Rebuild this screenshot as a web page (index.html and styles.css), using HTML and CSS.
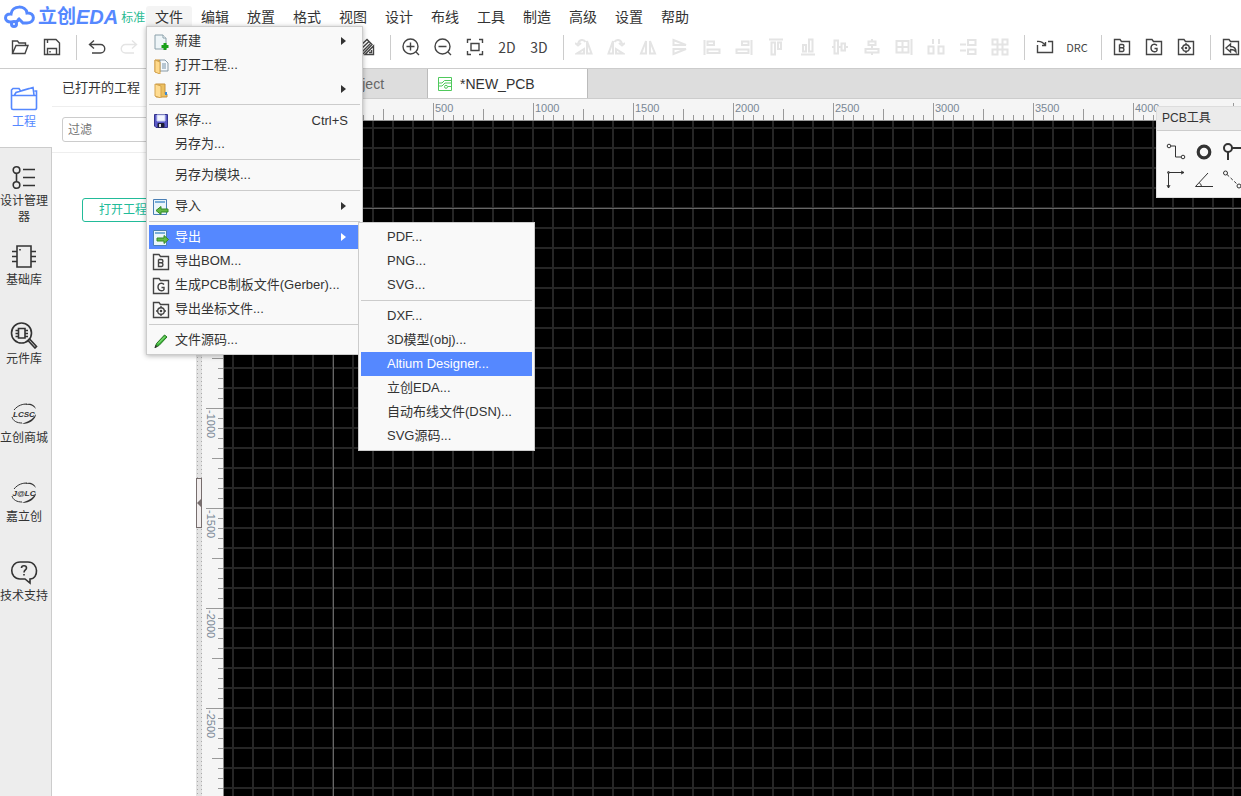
FILE: index.html
```html
<!DOCTYPE html>
<html lang="zh-CN">
<head>
<meta charset="utf-8">
<title>立创EDA</title>
<link rel="stylesheet" href="styles.css">
</head>
<body>
<svg class="sprite" aria-hidden="true">
  <symbol id="folder-box" viewBox="0 0 18 18"><path d="M1.500 16.500V1.500H7L8.500 3.500H16.500V16.500Z"/></symbol>
  <symbol id="bom" viewBox="0 0 18 18"><use href="#folder-box"/><path d="M6.500 6.500V13.500H9.500A1.900 1.900 0 0 0 9.500 9.800H6.500M9.300 9.800A1.600 1.600 0 0 0 9.300 6.500H6.500"/></symbol>
  <symbol id="gerber" viewBox="0 0 18 18"><use href="#folder-box"/><path d="M12 7.500C10.500 5.500 6 5.800 6 10S11 14.500 12 12.500V10.500H9.500"/></symbol>
  <symbol id="target" viewBox="0 0 18 18"><use href="#folder-box"/><circle cx="9" cy="10" r="3.300"/><circle cx="9" cy="10" r=".6"/><path d="M9 5V7M9 13V15M4 10H6M12 10H14"/></symbol>
</svg>
<header class="header">
  <div class="topline">
    <div class="logo">
      <svg class="cloud" viewBox="0 0 32 24"><path d="M8 17C-1 18 0 8 7 9C8 0 22 0 23 8C31 7 32 18 23 18H19L14 13"/><circle cx="10" cy="19" r="2.500"/><path d="M12 17L16 14"/></svg>
      <span class="logo-cn">立创</span><span class="logo-en">EDA</span><span class="edition">标准</span>
    </div>
    <nav class="menubar">
      <div class="menu-root">
        <button class="menu-button open">文件</button>
        <ul class="menu file-menu">
          <li class="item"><svg class="mi" viewBox="0 0 16 16"><path d="M2 1H10L13 4V15H2Z" fill="#eef5f8" stroke="#8aa0aa"/><path d="M10 1V4H13" fill="#fff" stroke="#8aa0aa"/><path d="M12 9V16M8.500 12.500H15.500" stroke="#18a018" stroke-width="3"/></svg><button>新建</button><i class="arrow"></i></li>
          <li class="item"><svg class="mi" viewBox="0 0 16 16"><path d="M2 2H7V14H2Z" fill="#e9b959" stroke="#c8933d"/><path d="M7 2H12L15 5V13H7Z" fill="#f5f9fc" stroke="#8799a5"/><path d="M9 6H13M9 8H13M9 10H13" stroke="#7893a8"/><path d="M2 2L7 4V16L2 14Z" fill="#ffd98a" stroke="#d3a34e"/></svg><button>打开工程...</button></li>
          <li class="item"><svg class="mi" viewBox="0 0 16 16"><path d="M3 2H12V12H14V15H3Z" fill="#ecc060" stroke="#c8933d"/><path d="M2 2L8 4V16L2 14Z" fill="#ffdc91" stroke="#d3a34e"/><path d="M13 10V13" stroke="#3a88d5" stroke-width="2"/></svg><button>打开</button><i class="arrow"></i></li>
          <li class="rule"></li>
          <li class="item"><svg class="mi" viewBox="0 0 16 16"><path d="M1.500 1.500H14.500V14.500H3L1.500 13Z" fill="#5a5ac8" stroke="#33338b"/><path d="M4 2H12V8H4Z" fill="#f2f5ff" stroke="#c5cdf0"/><path d="M5 10.500H11V14H5Z" fill="#1e1e37" stroke="#1e1e37"/><path d="M6 11H8V14H6Z" fill="#ddd" stroke="none"/></svg><button>保存...</button><kbd>Ctrl+S</kbd></li>
          <li class="item"><button>另存为...</button></li>
          <li class="rule"></li>
          <li class="item"><button>另存为模块...</button></li>
          <li class="rule"></li>
          <li class="item"><svg class="mi" viewBox="0 0 16 16"><path d="M.5.500H13.500V15.500H.500Z" fill="#eaf5fb" stroke="#4a7fb5"/><path d="M2 3H12" stroke="#78aed8" stroke-width="2"/><path d="M3 11.500L8 7.500V10H15V13H8V15.500Z" fill="#63b946" stroke="#338a26"/></svg><button>导入</button><i class="arrow"></i></li>
          <li class="rule"></li>
          <li class="item selected"><svg class="mi" viewBox="0 0 16 16"><path d="M.5.500H13.500V15.500H.500Z" fill="#eaf5fb" stroke="#4a7fb5"/><path d="M2 3H12" stroke="#78aed8" stroke-width="2"/><path d="M15.500 9.500L11 5.500V8H4V11H11V13.500Z" fill="#63b946" stroke="#338a26"/></svg><button>导出</button><i class="arrow"></i>
            <ul class="menu submenu">
              <li class="item"><button>PDF...</button></li>
              <li class="item"><button>PNG...</button></li>
              <li class="item"><button>SVG...</button></li>
              <li class="rule"></li>
              <li class="item"><button>DXF...</button></li>
              <li class="item"><button>3D模型(obj)...</button></li>
              <li class="item selected"><button>Altium Designer...</button></li>
              <li class="item"><button>立创EDA...</button></li>
              <li class="item"><button>自动布线文件(DSN)...</button></li>
              <li class="item"><button>SVG源码...</button></li>
            </ul>
          </li>
          <li class="item"><svg class="mi line"><use href="#bom"/></svg><button>导出BOM...</button></li>
          <li class="item"><svg class="mi line"><use href="#gerber"/></svg><button>生成PCB制板文件(Gerber)...</button></li>
          <li class="item"><svg class="mi line"><use href="#target"/></svg><button>导出坐标文件...</button></li>
          <li class="rule"></li>
          <li class="item"><svg class="mi" viewBox="0 0 16 16"><path d="M2 14.500L3.500 10.500L11.500 2L14 4L6 12.500Z" fill="#3db83a" stroke="#23761f"/><path d="M5 10.500L12 3.500" stroke="#a9ec9a"/><path d="M2 14.500L3 12.500L4 13.500Z" fill="#555"/></svg><button>文件源码...</button></li>
        </ul>
      </div>
      <button class="menu-button">编辑</button>
      <button class="menu-button">放置</button>
      <button class="menu-button">格式</button>
      <button class="menu-button">视图</button>
      <button class="menu-button">设计</button>
      <button class="menu-button">布线</button>
      <button class="menu-button">工具</button>
      <button class="menu-button">制造</button>
      <button class="menu-button">高级</button>
      <button class="menu-button">设置</button>
      <button class="menu-button">帮助</button>
    </nav>
  </div>
  <div class="toolbar">
    <button class="tool" aria-label="打开"><svg viewBox="0 0 18 18"><path d="M1.500 15V3H6.500L8 5H14.500V7.500M1.500 15.500L5 7.500H17L14 15.500Z"/></svg></button>
    <button class="tool" aria-label="保存"><svg viewBox="0 0 18 18"><path d="M1.500 1.500H13L16.500 5V16.500H1.500ZM4.500 16V10.500H13.500V16M4.500 2V5M7 13V14.500"/></svg></button>
    <span class="sep"></span>
    <button class="tool" aria-label="撤销"><svg viewBox="0 0 18 18"><path d="M6 2.500L1.500 6.500L6 10.500M2 6.500H12.500A4.200 4.200 0 0 1 12.500 15H4"/></svg></button>
    <button class="tool off thin" aria-label="重做"><svg viewBox="0 0 18 18"><path d="M12 2.500L16.500 6.500L12 10.500M16 6.500H5.500A4.200 4.200 0 0 0 5.500 15H14"/></svg></button>
    <span class="covered"></span>
    <button class="tool" aria-label="清理"><svg viewBox="0 0 18 18"><path d="M3 8L10 1.500L15 6.500L6 16M4 11L12 3.500M5 14L14 5M8 16.500H16.500V8ZM12 14.500H14.500V12"/></svg></button>
    <span class="sep"></span>
    <button class="tool" aria-label="放大"><svg viewBox="0 0 18 18"><circle cx="8.500" cy="8.500" r="7.500"/><path d="M14 14L17 17M4.500 8.500H12.500M8.500 4.500V12.500"/></svg></button>
    <button class="tool" aria-label="缩小"><svg viewBox="0 0 18 18"><circle cx="8.500" cy="8.500" r="7.500"/><path d="M14 14L17 17M4.500 8.500H12.500"/></svg></button>
    <button class="tool" aria-label="适应窗口"><svg viewBox="0 0 18 18"><path d="M1.500 5V1.500H5M13 1.500H16.500V5M16.500 13V16.500H13M5 16.500H1.500V13"/><path d="M5 5.500H13V12.500H5Z"/></svg></button>
    <button class="tool">2D</button>
    <button class="tool">3D</button>
    <span class="sep"></span>
    <button class="tool off" aria-label="左旋"><svg viewBox="0 0 18 18"><path d="M3 6C4 1 9 1 10.500 4M0 5L3 7.500L6 5M2 15.500H9V11ZM12 15.500V3L16.500 15.500Z"/></svg></button>
    <button class="tool off" aria-label="右旋"><svg viewBox="0 0 18 18"><path d="M15 6C14 1 9 1 7.500 4M18 5L15 7.500L12 5M16 15.500H9V11ZM6 15.500V3L1.500 15.500Z"/></svg></button>
    <button class="tool off" aria-label="水平翻转"><svg viewBox="0 0 18 18"><path d="M7 15.500H2L7 3ZM11 15.500H16L11 3Z"/></svg></button>
    <button class="tool off" aria-label="垂直翻转"><svg viewBox="0 0 18 18"><path d="M2.500 7V2L15 7ZM2.500 11V16L15 11Z"/></svg></button>
    <button class="tool off" aria-label="左对齐"><svg viewBox="0 0 18 18"><path d="M1.500 2V17M4.500 3.500H11V7H4.500ZM4.500 11.500H16.500V15H4.500Z"/></svg></button>
    <button class="tool off" aria-label="右对齐"><svg viewBox="0 0 18 18"><path d="M16.500 2V17M7 3.500H13.500V7H7ZM1.500 11.500H13.500V15H1.500Z"/></svg></button>
    <button class="tool off" aria-label="顶对齐"><svg viewBox="0 0 18 18"><path d="M2 1.500H16M4.500 4.500H8V16.500H4.500ZM11 4.500H14V11H11Z"/></svg></button>
    <button class="tool off" aria-label="底对齐"><svg viewBox="0 0 18 18"><path d="M2 16.500H16M10 1.500H13.500V13.500H10ZM4 7H7V13.500H4Z"/></svg></button>
    <button class="tool off" aria-label="水平居中"><svg viewBox="0 0 18 18"><path d="M1 9H3.500M3.500 2.500H7V15.500H3.500ZM7 9H10.500M10.500 5.500H14V12.500H10.500ZM14 9H17"/></svg></button>
    <button class="tool off" aria-label="垂直居中"><svg viewBox="0 0 18 18"><path d="M9 1V3.500M5.500 3.500H12.500V7H5.500ZM9 7V11M2.500 11H15.500V14.500H2.500ZM9 14.500V17"/></svg></button>
    <button class="tool off" aria-label="对齐网格"><svg viewBox="0 0 18 18"><path d="M1.500 3H13.500V14.500H1.500ZM7.500 3V14.500M1.500 9H13.500M16.500 1V17"/></svg></button>
    <button class="tool off" aria-label="水平分布"><svg viewBox="0 0 18 18"><path d="M6 1V6M12 1V6M1.500 8.500H6.500V15.500H1.500ZM11.500 8.500H16.500V15.500H11.500Z"/></svg></button>
    <button class="tool off" aria-label="垂直分布"><svg viewBox="0 0 18 18"><path d="M1 6.500H7M1 12.500H7M9 2H16.500V7H9ZM9 11.500H16.500V16H9Z"/></svg></button>
    <button class="tool off" aria-label="阵列"><svg viewBox="0 0 18 18"><path d="M1.500 1.500H6.500V6.500H1.500ZM11.500 1.500H16.500V6.500H11.500ZM1.500 11.500H6.500V16.500H1.500ZM11.500 11.500H16.500V16.500H11.500ZM6.500 6.500H11.500V11.500H6.500Z"/></svg></button>
    <span class="sep"></span>
    <button class="tool" aria-label="导入变更"><svg viewBox="0 0 18 18"><path d="M1.500 7V14.500H16.500V3.500H12M1 3.500C5 3 7 4 9.500 7.500M9.500 4V7.500H6"/></svg></button>
    <button class="tool drc">DRC</button>
    <span class="sep"></span>
    <button class="tool" aria-label="BOM"><svg><use href="#bom"/></svg></button>
    <button class="tool" aria-label="Gerber"><svg><use href="#gerber"/></svg></button>
    <button class="tool" aria-label="坐标文件"><svg><use href="#target"/></svg></button>
    <span class="sep"></span>
    <button class="tool" aria-label="返回"><svg viewBox="0 0 18 18"><use href="#folder-box"/><path d="M4 10L8.500 6V8.500C12 8.500 14 10.500 14 14C12.500 11.500 11 11.500 8.500 11.500V14Z"/></svg></button>
  </div>
</header>
<main class="main">
  <nav class="rail">
    <button class="rail-item active"><svg viewBox="0 0 28 28"><path d="M1.500 11.500H26.500V24A1.500 1.500 0 0 1 25 25.500H3A1.500 1.500 0 0 1 1.500 24V6L3 4.500H9L10.500 7M4.500 11L6 8.500L23 3.500L24 11M12 6.500L19 4.500M24.500 7H26.500V11"/></svg><span>工程</span></button>
    <button class="rail-item"><svg viewBox="0 0 28 28"><circle cx="6.500" cy="7" r="3.300"/><circle cx="6.500" cy="22" r="3.300"/><path d="M6.500 10.300V18.700M13 6.500H25M13 14.500H25M13 22.500H25"/></svg><span>设计管理器</span></button>
    <button class="rail-item"><svg viewBox="0 0 28 28"><path d="M7 4H21V25H7ZM2 9.500H7M2 14.500H7M2 19.500H7M21 9.500H26M21 14.500H26M21 19.500H26M10 7V8.500"/></svg><span>基础库</span></button>
    <button class="rail-item"><svg viewBox="0 0 28 28"><circle cx="11.500" cy="12" r="10"/><path d="M8.500 7.500H15V17H8.500ZM5.500 9.500H8M5.500 12.500H8M5.500 15.500H8M15 9.500H18M15 12.500H18M15 15.500H18M18 19.500L19.500 18L26.500 25.500L25 27Z"/></svg><span>元件库</span></button>
    <button class="rail-item"><svg class="brand" viewBox="0 0 28 28"><path d="M4 10C8 5 13 4 17 4M2 17C3 21 7 23 12 23"/><path class="solid" d="M14 23C20 21 24 18 26 14C26 19 20 24 12 24ZM14 5C19 4 23 5 26 9C24 3 18 3 14 5Z"/><text x="14" y="17" text-anchor="middle">LCSC</text></svg><span>立创商城</span></button>
    <button class="rail-item"><svg class="brand" viewBox="0 0 28 28"><path d="M4 10C8 5 13 4 17 4M2 17C3 21 7 23 12 23"/><path class="solid" d="M14 23C20 21 24 18 26 14C26 19 20 24 12 24ZM14 5C19 4 23 5 26 9C24 3 18 3 14 5Z"/><text x="14" y="17" text-anchor="middle">J@LC</text></svg><span>嘉立创</span></button>
    <button class="rail-item"><svg viewBox="0 0 28 28"><path d="M10 4H18C29 4 29 21 20 21L20 25L15 21H10C-1 21-1 4 10 4Z"/><path d="M11.500 10C11.500 7 16.500 7 16.500 10C16.500 12 14 12 14 14.500M14 16V17.500"/></svg><span>技术支持</span></button>
  </nav>
  <aside class="project">
    <h2>已打开的工程</h2>
    <div class="filter"><input type="text" placeholder="过滤" aria-label="过滤"></div>
    <button class="open-project">打开工程</button>
  </aside>
  <div class="splitter"><button class="collapse" aria-label="收起"><i></i></button></div>
  <section class="editor">
    <div class="tabs">
      <button class="tab first">开始</button>
      <button class="tab">NEW_Project</button>
      <button class="tab current"><svg viewBox="0 0 14 14"><path d="M.5.500H13.500V13.500H.500ZM.500 6H4L6.500 3.500H13.500M.500 9H4L7 6H13.500M10 9.500H13.500"/><circle cx="8" cy="9.800" r="1.500"/></svg>*NEW_PCB</button>
    </div>
    <div class="ruler-x"><span>-500</span><span>0</span><span>500</span><span>1000</span><span>1500</span><span>2000</span><span>2500</span><span>3000</span><span>3500</span><span>4000</span></div>
    <div class="work">
      <div class="ruler-y"><span>0</span><span>-500</span><span>-1000</span><span>-1500</span><span>-2000</span><span>-2500</span></div>
      <div class="canvas"></div>
    </div>
    <div class="palette">
      <h3>PCB工具</h3>
      <div class="palette-tools">
        <button aria-label="导线"><svg viewBox="0 0 20 20"><circle cx="3" cy="4" r="1.800"/><circle cx="17" cy="15" r="1.800"/><path d="M5 4H9.500V15H15"/></svg></button>
        <button aria-label="焊盘"><svg viewBox="0 0 20 20"><circle cx="10" cy="10" r="5.800" stroke-width="3.200"/></svg></button>
        <button aria-label="过孔"><svg viewBox="0 0 20 20"><circle cx="6" cy="6" r="4" stroke-width="2"/><path d="M10 6H20M6 10V18" stroke-width="2"/></svg></button>
        <button aria-label="坐标原点"><svg viewBox="0 0 20 20"><path d="M2.500 18V2.500H18M1 15L2.500 18L4 15M15 1L18 2.500L15 4"/><circle cx="2.500" cy="2.500" r="1"/></svg></button>
        <button aria-label="量角器"><svg viewBox="0 0 20 20"><path d="M14 3L1.500 16.500H19M5 12.500A5 5 0 0 1 7.500 16.500"/></svg></button>
        <button aria-label="连接焊盘"><svg viewBox="0 0 20 20"><circle cx="3.500" cy="3" r="2"/><circle cx="17" cy="16" r="2"/><path d="M5 4.500L15.500 14.500" stroke-dasharray="3 2"/></svg></button>
      </div>
    </div>
  </section>
</main>
</body>
</html>
```
FILE: styles.css
```css
* { box-sizing: border-box; }
body {
  margin: 0;
  height: 100vh;
  display: flex;
  flex-direction: column;
  overflow: hidden;
  background: #fff;
  color: #333;
  font-family: "Liberation Sans", "Noto Sans CJK SC", sans-serif;
  font-size: 13px;
}
button {
  margin: 0;
  padding: 0;
  border: 0;
  background: none;
  color: inherit;
  font: inherit;
  white-space: nowrap;
}
svg { fill: none; stroke: currentColor; }
ul { list-style: none; margin: 0; padding: 0; }
h2, h3 { margin: 0; font-weight: normal; }
.sprite { display: none; }

.header { border-bottom: 1px solid #ccc; flex: none; }
.topline { display: flex; height: 28px; }
.logo {
  display: flex;
  align-items: center;
  flex: none;
  width: 146px;
  padding: 6px 0 0 4px;
  color: #5588ff;
  line-height: 24px;
}
.cloud { width: 32px; height: 24px; margin-right: 2px; stroke-width: 3; }
.logo-cn { font-size: 19px; font-weight: bold; }
.logo-en { font-size: 20px; font-weight: bold; font-style: italic; }
.edition { margin-left: 3px; padding-top: 2px; font-size: 12px; color: #2abb93; }

.menubar { display: flex; padding-top: 6px; font-size: 14px; }
.menu-root { position: relative; z-index: 5; }
.menu-button { width: 46px; height: 22px; line-height: 22px; color: #333; }
.open { background: #f4f4f4; border-radius: 3px 3px 0 0; }

.menu {
  position: absolute;
  padding: 2px;
  border: 1px solid #ccc;
  background: #f9f9f9;
  font-size: 13px;
}
.file-menu {
  top: 20px;
  left: 0;
  width: 217px;
  box-shadow: 0 1px 5px rgba(0, 0, 0, .3);
}
.submenu { top: -3px; left: 209px; width: 177px; color: #333; }
.item {
  position: relative;
  display: flex;
  align-items: center;
  height: 24px;
  padding-right: 12px;
}
.item > button { flex: 1; padding-left: 26px; line-height: 24px; text-align: left; }
.item kbd { font: inherit; }
.mi { position: absolute; left: 4px; top: 5px; width: 16px; height: 16px; }
.line { left: 3px; top: 4px; width: 18px; height: 18px; color: #444; stroke-width: 1.4; }
.selected { background: #5588ff; color: #fff; }
.rule { height: 7px; padding: 3px 0; }
.rule::before { content: ""; display: block; height: 1px; background: #ccc; }
.arrow {
  border: 4px solid transparent;
  border-left: 5px solid currentColor;
  border-right: 0;
  margin-right: 2px;
}

.toolbar {
  display: flex;
  align-items: center;
  height: 40px;
  padding: 0 0 2px 4px;
  overflow: hidden;
}
.tool {
  display: flex;
  flex: none;
  align-items: center;
  justify-content: center;
  width: 32px;
  height: 32px;
  color: #444;
  font-family: "Noto Sans CJK SC", sans-serif;
  font-size: 14px;
}
.tool svg { width: 18px; height: 18px; stroke-width: 1.4; }
.tool.off { color: #e4e4e4; }
.off svg { stroke-width: 2; }
.thin svg { stroke-width: 1.4; }
.tool.drc { font-size: 11px; }
.sep { flex: none; width: 13px; height: 25px; }
.sep::before { content: ""; display: block; width: 1px; height: 25px; margin-left: 8px; background: #ccc; }
.covered { flex: none; width: 205px; }

.main { display: flex; flex: 1; min-height: 0; }
.rail {
  flex: none;
  width: 52px;
  background: linear-gradient(#ccc, #ccc) right / 1px 100% no-repeat #ededed;
}
.rail-item {
  display: flex;
  flex-direction: column;
  align-items: center;
  width: 52px;
  height: 79px;
  padding: 15px 4px 0 0;
  font-size: 12px;
  line-height: 16px;
}
.rail-item svg { flex: none; width: 28px; height: 28px; margin-bottom: 2px; stroke-width: 1.6; }
.rail-item span { width: 48px; white-space: normal; }
.active { background: #fff; color: #5588ff; border-bottom: 1px solid #ccc; }
.brand { font: italic bold 8px "Liberation Sans", sans-serif; }
.rail-item .brand { stroke-width: 1; }
.brand text, .brand .solid { fill: currentColor; stroke: none; }

.project { flex: none; width: 144px; overflow: hidden; }
.project h2 {
  height: 38px;
  padding-left: 10px;
  border-bottom: 1px solid #eee;
  font-size: 13px;
  line-height: 38px;
  white-space: nowrap;
}
.filter { padding: 10px; height: 46px; border-bottom: 1px solid #eee; }
.filter input {
  display: block;
  width: 124px;
  height: 25px;
  padding: 0 5px;
  border: 1px solid #ccc;
  border-radius: 3px;
  font: 12px "Liberation Sans", "Noto Sans CJK SC", sans-serif;
}
.open-project {
  width: 82px;
  height: 24px;
  margin: 45px 0 0 30px;
  border: 1px solid #22bb99;
  border-radius: 3px;
  color: #22bb99;
  font-size: 12px;
  line-height: 22px;
}

.splitter {
  display: flex;
  align-items: center;
  flex: none;
  width: 6px;
  padding-top: 141px;
  background:
    linear-gradient(#aaa 1px, transparent 1px) 1px 0 / 1px 4px repeat-y,
    linear-gradient(#aaa 1px, transparent 1px) 5px 0 / 1px 4px repeat-y,
    #e2e2e2;
}
.collapse {
  display: flex;
  align-items: center;
  justify-content: flex-end;
  width: 6px;
  height: 50px;
  border: 1px solid #776e6e;
  background: #f1eded;
}
.collapse i { border: 4px solid transparent; border-right-color: #776e6e; border-left: 0; }

.editor { position: relative; display: flex; flex-direction: column; flex: 1; min-width: 0; overflow: hidden; }
.tabs { display: flex; height: 30px; flex: none; background: #ddd; border-bottom: 1px solid #ccc; font-size: 14px; }
.tab {
  display: flex;
  align-items: center;
  width: 160px;
  padding-left: 32px;
  border-right: 1px solid #bbb;
  color: #666;
}
.first { width: 66px; padding-left: 16px; }
.current { padding-left: 10px; background: #fff; color: #333; }
.current svg { width: 14px; height: 14px; margin-right: 8px; color: #4fc95c; }

.ruler-x {
  display: flex;
  flex: none;
  height: 22px;
  margin-left: 22px;
  padding-left: 9px;
  border-bottom: 1px solid #999;
  color: #7a8896;
  font-size: 11px;
  line-height: 19px;
  background:
    repeating-linear-gradient(90deg, #999 0 1px, transparent 1px 100px) 9px 4px / 100% 18px no-repeat,
    repeating-linear-gradient(90deg, #999 0 1px, transparent 1px 50px) 9px 10px / 100% 12px no-repeat,
    repeating-linear-gradient(90deg, #999 0 1px, transparent 1px 10px) 9px 16px / 100% 6px no-repeat,
    #f5f5f5;
}
.ruler-x span { flex: 0 0 100px; padding-left: 2px; }
.work { display: flex; flex: 1; min-height: 0; }
.ruler-y {
  display: flex;
  flex-direction: column;
  flex: none;
  width: 22px;
  padding: 87px 0 0 3px;
  border-right: 1px solid #888;
  color: #7a8896;
  font-size: 11px;
  line-height: 11px;
  overflow: hidden;
  background:
    repeating-linear-gradient(#999 0 1px, transparent 1px 100px) 4px 87px / 18px 100% no-repeat,
    repeating-linear-gradient(#999 0 1px, transparent 1px 50px) 10px 87px / 12px 100% no-repeat,
    repeating-linear-gradient(#999 0 1px, transparent 1px 10px) 16px 87px / 6px 100% no-repeat,
    #f5f5f5;
}
.ruler-y span { flex: 0 0 100px; padding-top: 2px; writing-mode: vertical-rl; align-self: flex-start; }
.canvas {
  flex: 1;
  background:
    linear-gradient(#666, #666) 109px 0 / 1px 100% no-repeat,
    linear-gradient(#666, #666) 0 87px / 100% 1px no-repeat,
    linear-gradient(90deg, #262626 2px, transparent 2px) 8px 0 / 20px 20px,
    linear-gradient(#262626 2px, transparent 2px) 0 6px / 20px 20px,
    #000;
}

.palette {
  position: absolute;
  top: 37px;
  right: 0;
  width: 85px;
  height: 92px;
  overflow: hidden;
  border: 1px solid #ddd;
  border-right: 0;
  border-radius: 3px 0 0 0;
  background: #f9f9f9;
}
.palette h3 {
  height: 24px;
  padding-left: 5px;
  border-bottom: 1px solid #ccc;
  background: #ebebeb;
  font-size: 12px;
  line-height: 22px;
}
.palette-tools { display: grid; grid-template-columns: repeat(3, 28px); grid-auto-rows: 28px; padding: 7px 0 0 5px; }
.palette-tools svg { display: block; width: 20px; height: 20px; margin: 4px; }
```
